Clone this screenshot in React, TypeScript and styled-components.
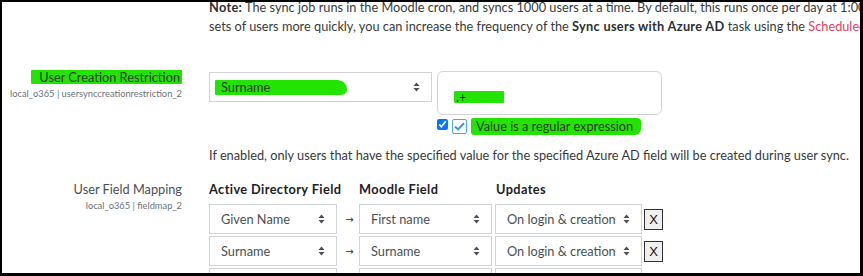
import React from "react";
import styled, { createGlobalStyle } from "styled-components";

const GlobalStyle = createGlobalStyle`
  html, body {
    margin: 0;
    padding: 0;
    background: #000;
  }
  body {
    font-family: Lato, "Open Sans", sans-serif;
  }
`;

const GREEN = "#22e400";

const Frame = styled.div`
  margin: 2px 3px 3px 2px;
  height: 271px;
  background: #fff;
  overflow: hidden;
  color: #373a3c;
  font-size: 12.75px;
  line-height: 19px;
`;

const Setting = styled.div<{ $top: number }>`
  display: grid;
  grid-template-columns: 180px minmax(0, 1fr);
  column-gap: 27px;
  margin-top: ${(p) => p.$top}px;
`;

const LabelCol = styled.div`
  display: flex;
  flex-direction: column;
  align-items: flex-end;
  text-align: right;
`;

const LabelText = styled.div`
  color: #495057;
  line-height: 19px;
  white-space: nowrap;
`;

const SubLabel = styled.div`
  color: #6a737b;
  font-size: 9.3px;
  line-height: 14px;
  white-space: nowrap;
`;

const Content = styled.div`
  min-width: 0;
`;

const Note = styled.p`
  margin: 0;
  white-space: nowrap;
`;

const Strong = styled.b`
  font-weight: 700;
  letter-spacing: 0.3px;
  color: #2b2f33;
`;

const Link = styled.a`
  color: #e4405f;
  text-decoration: none;
`;

const Mark = styled.span<{ $pl?: number; $w?: number; $h: number; $radius?: string }>`
  display: inline-block;
  box-sizing: border-box;
  background: ${GREEN};
  color: #2c3a26;
  height: ${(p) => p.$h}px;
  line-height: ${(p) => p.$h}px;
  padding-left: ${(p) => p.$pl ?? 0}px;
  width: ${(p) => (p.$w ? `${p.$w}px` : "auto")};
  border-radius: ${(p) => p.$radius ?? "1px"};
  white-space: nowrap;
`;

const Controls = styled.div`
  display: flex;
  align-items: flex-start;
  gap: 5px;
  margin-top: 4px;
`;

const Select = styled.div<{ $w: number }>`
  box-sizing: border-box;
  width: ${(p) => p.$w}px;
  height: 30px;
  border: 1px solid #ced4da;
  padding: 0 11px;
  display: flex;
  align-items: center;
  justify-content: space-between;
  color: #495057;
  background: #fff;
  white-space: nowrap;
`;

const RegexGroup = styled.div`
  display: flex;
  flex-direction: column;
  margin-top: -1px;
`;

const TextBox = styled.div`
  box-sizing: border-box;
  width: 225px;
  height: 44px;
  border: 1px solid #d2d4d7;
  border-radius: 6px;
  padding: 16px 0 0 16px;
`;

const CheckRow = styled.div`
  display: flex;
  align-items: flex-start;
  margin-top: 3px;
  height: 16px;
`;

const NativeCheck = styled.input`
  width: 11px;
  height: 11px;
  margin: 1px 4px 0 0;
  accent-color: #0075ff;
`;

const FancyCheck = styled.span`
  box-sizing: border-box;
  width: 15px;
  height: 15px;
  margin: 1px 4px 0 0;
  border: 1px solid #4aa8e0;
  border-radius: 2px;
  background: #fff;
  display: flex;
  align-items: center;
  justify-content: center;
`;

const Help = styled.div`
  margin-top: 12px;
  white-space: nowrap;
`;

const MapGrid = styled.div`
  display: grid;
  grid-template-columns: 128px 22px 136px 149px 19px;
  row-gap: 2px;
`;

const HeadCell = styled.div<{ $pl?: number }>`
  font-weight: 700;
  letter-spacing: 0.4px;
  color: #1d2125;
  white-space: nowrap;
  height: 22px;
  padding-left: ${(p) => p.$pl ?? 0}px;
`;

const ArrowCell = styled.div`
  display: flex;
  align-items: center;
  justify-content: center;
  font-family: "DejaVu Sans", sans-serif;
  font-size: 10px;
  color: #333;
  padding-left: 3px;
`;

const RemoveButton = styled.button`
  box-sizing: border-box;
  align-self: center;
  width: 19px;
  height: 21px;
  padding: 0;
  border: 1px solid #333;
  background: #efefef;
  font-family: "Liberation Sans", Arial, sans-serif;
  font-size: 13px;
  color: #111;
  line-height: 19px;
`;

const Updown = () => (
  <svg width="7" height="10" viewBox="0 0 7 10">
    <path d="M0.5 4 L3.5 0.5 L6.5 4 Z M0.5 6 L3.5 9.5 L6.5 6 Z" fill="#495057" />
  </svg>
);

const rows = [
  { ad: "Given Name", moodle: "First name", upd: "On login & creation" },
  { ad: "Surname", moodle: "Surname", upd: "On login & creation" },
  { ad: "Email", moodle: "Email address", upd: "On login & creation" },
];

export default function App() {
  return (
    <>
      <GlobalStyle />
      <Frame>
        <Setting $top={-4}>
          <div />
          <Content>
            <Note>
              <Strong>Note:</Strong> The sync job runs in the Moodle cron, and syncs 1000 users at a time. By default, this runs
              once per day at 1:00 AM in the time zone local to the server. To sync large
              <br />
              sets of users more quickly, you can increase the frequency of the <Strong>Sync users with Azure AD</Strong> task
              using the <Link href="#">Scheduled tasks management page</Link>.
            </Note>
          </Content>
        </Setting>

        <Setting $top={32}>
          <LabelCol>
            <LabelText>
              <Mark $h={14} $pl={8} style={{ paddingRight: 2 }}>
                User Creation Restriction
              </Mark>
            </LabelText>
            <SubLabel>local_o365 | usersynccreationrestriction_2</SubLabel>
          </LabelCol>
          <Content>
            <Controls>
              <Select $w={223} style={{ paddingLeft: 5 }}>
                <Mark $h={15} $pl={6} $w={132} $radius="1px 10px 6px 1px">
                  Surname
                </Mark>
                <Updown />
              </Select>
              <RegexGroup>
                <TextBox>
                  <Mark $h={12} $pl={2} $w={50}>
                    .+
                  </Mark>
                </TextBox>
                <CheckRow>
                  <NativeCheck type="checkbox" defaultChecked />
                  <FancyCheck>
                    <svg width="11" height="9" viewBox="0 0 11 9">
                      <path d="M1 4.6 L4 7.4 L10 1.2" fill="none" stroke="#3599dc" strokeWidth="2" />
                    </svg>
                  </FancyCheck>
                  <Mark $h={17} $pl={5} $w={170} $radius="2px 4px 6px 3px">
                    Value is a regular expression
                  </Mark>
                </CheckRow>
              </RegexGroup>
            </Controls>
            <Help>
              If enabled, only users that have the specified value for the specified Azure AD field will be created during user
              sync.
            </Help>
          </Content>
        </Setting>

        <Setting $top={15}>
          <LabelCol>
            <LabelText>User Field Mapping</LabelText>
            <SubLabel>local_o365 | fieldmap_2</SubLabel>
          </LabelCol>
          <Content>
            <MapGrid>
              <HeadCell>Active Directory Field</HeadCell>
              <div />
              <HeadCell>Moodle Field</HeadCell>
              <HeadCell $pl={1}>Updates</HeadCell>
              <div />
              {rows.map((r) => (
                <React.Fragment key={r.ad}>
                  <Select $w={128}>
                    {r.ad}
                    <Updown />
                  </Select>
                  <ArrowCell>→</ArrowCell>
                  <Select $w={133}>
                    {r.moodle}
                    <Updown />
                  </Select>
                  <Select $w={147}>
                    {r.upd}
                    <Updown />
                  </Select>
                  <RemoveButton>X</RemoveButton>
                </React.Fragment>
              ))}
            </MapGrid>
          </Content>
        </Setting>
      </Frame>
    </>
  );
}
